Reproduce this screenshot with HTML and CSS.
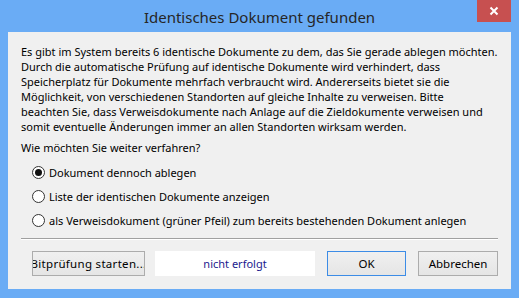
FILE: index.html
```html
<!DOCTYPE html>
<html lang="de">
<head>
<meta charset="utf-8">
<title>Identisches Dokument gefunden</title>
<link rel="stylesheet" href="styles.css">
</head>
<body>
<div class="window">
  <div class="titlebar">
    <span class="spacer"></span>
    <span class="title">Identisches Dokument gefunden</span>
    <button class="close" aria-label="Schließen">
      <svg width="10" height="10" viewBox="0 0 10 10"><path d="M1.5 1.5 L8.5 8.5 M8.5 1.5 L1.5 8.5" stroke="#fff" stroke-width="2" fill="none"/></svg>
    </button>
  </div>
  <div class="client">
    <p class="msg">Es gibt im System bereits 6 identische Dokumente zu dem, das Sie gerade ablegen möchten.<br>Durch die automatische Prüfung auf identische Dokumente wird verhindert, dass<br>Speicherplatz für Dokumente mehrfach verbraucht wird. Andererseits bietet sie die<br>Möglichkeit, von verschiedenen Standorten auf gleiche Inhalte zu verweisen. Bitte<br>beachten Sie, dass Verweisdokumente nach Anlage auf die Zieldokumente verweisen und<br>somit eventuelle Änderungen immer an allen Standorten wirksam werden.</p>
    <p class="question">Wie möchten Sie weiter verfahren?</p>
    <div class="options">
      <div class="option"><span class="radio checked"></span><span>Dokument dennoch ablegen</span></div>
      <div class="option"><span class="radio"></span><span>Liste der identischen Dokumente anzeigen</span></div>
      <div class="option"><span class="radio"></span><span>als Verweisdokument (grüner Pfeil) zum bereits bestehenden Dokument anlegen</span></div>
    </div>
    <div class="separator"></div>
    <div class="buttons">
      <button class="btn bit"><span>Bitprüfung starten...</span></button>
      <div class="status">nicht erfolgt</div>
      <button class="btn ok">OK</button>
      <button class="btn cancel">Abbrechen</button>
    </div>
  </div>
</div>
</body>
</html>
```
FILE: styles.css
```css
html, body {
  margin: 0;
  padding: 0;
}
body {
  width: 519px;
  height: 298px;
  overflow: hidden;
  font-family: "Noto Sans", "Open Sans", sans-serif;
}
.window {
  width: 519px;
  height: 298px;
  background: #6aacf5;
  display: flex;
  flex-direction: column;
  box-sizing: border-box;
}
.titlebar {
  height: 32px;
  display: grid;
  grid-template-columns: 1fr auto 1fr;
  align-items: start;
  flex: none;
}
.title {
  font-size: 15px;
  color: #262626;
  line-height: 20px;
  padding-top: 7px;
  white-space: nowrap;
}
.close {
  justify-self: end;
  width: 34px;
  height: 22px;
  margin: 0 8px 0 0;
  padding: 0;
  border: none;
  background: #c75050;
  display: flex;
  align-items: center;
  justify-content: center;
}
.client {
  margin: 0 8px 9px 8px;
  height: 257px;
  background: #f0f0f0;
  box-sizing: border-box;
  padding: 12px 13px 0 13px;
  font-size: 11px;
  color: #000;
  display: flex;
  flex-direction: column;
}
.msg {
  margin: 0;
  line-height: 15px;
  white-space: nowrap;
}
.question {
  margin: 6px 0 0 0;
  line-height: 15px;
}
.options {
  margin-top: 5px;
  padding-left: 11px;
  display: flex;
  flex-direction: column;
}
.option {
  height: 24px;
  display: flex;
  align-items: center;
  gap: 4px;
  white-space: nowrap;
}
.radio {
  width: 13px;
  height: 13px;
  box-sizing: border-box;
  border: 1px solid #333;
  border-radius: 50%;
  background: #fff;
  display: flex;
  align-items: center;
  justify-content: center;
  flex: none;
}
.radio.checked::after {
  content: "";
  width: 7px;
  height: 7px;
  border-radius: 50%;
  background: #111;
}
.separator {
  margin-top: 6px;
  height: 1px;
  background: #a0a0a0;
  border-bottom: 1px solid #fff;
}
.buttons {
  margin-top: 11px;
  padding-left: 11px;
  display: flex;
  align-items: center;
  height: 25px;
}
.btn {
  height: 25px;
  box-sizing: border-box;
  border: 1px solid #acacac;
  background: linear-gradient(#f0f0f0, #e5e5e5);
  font-family: inherit;
  font-size: 11.5px;
  color: #000;
  padding: 0;
  display: flex;
  align-items: center;
  justify-content: center;
  white-space: nowrap;
  overflow: hidden;
}
.bit {
  width: 113px;
}
.bit span {
  flex: none;
  letter-spacing: 0.3px;
}
.status {
  margin-left: 10px;
  width: 160px;
  height: 25px;
  background: #fff;
  color: #1a1a8e;
  display: flex;
  align-items: center;
  justify-content: center;
}
.ok {
  margin-left: 12px;
  width: 79px;
  border-color: #3c8ce6;
}
.cancel {
  margin-left: 12px;
  width: 80px;
}
```
